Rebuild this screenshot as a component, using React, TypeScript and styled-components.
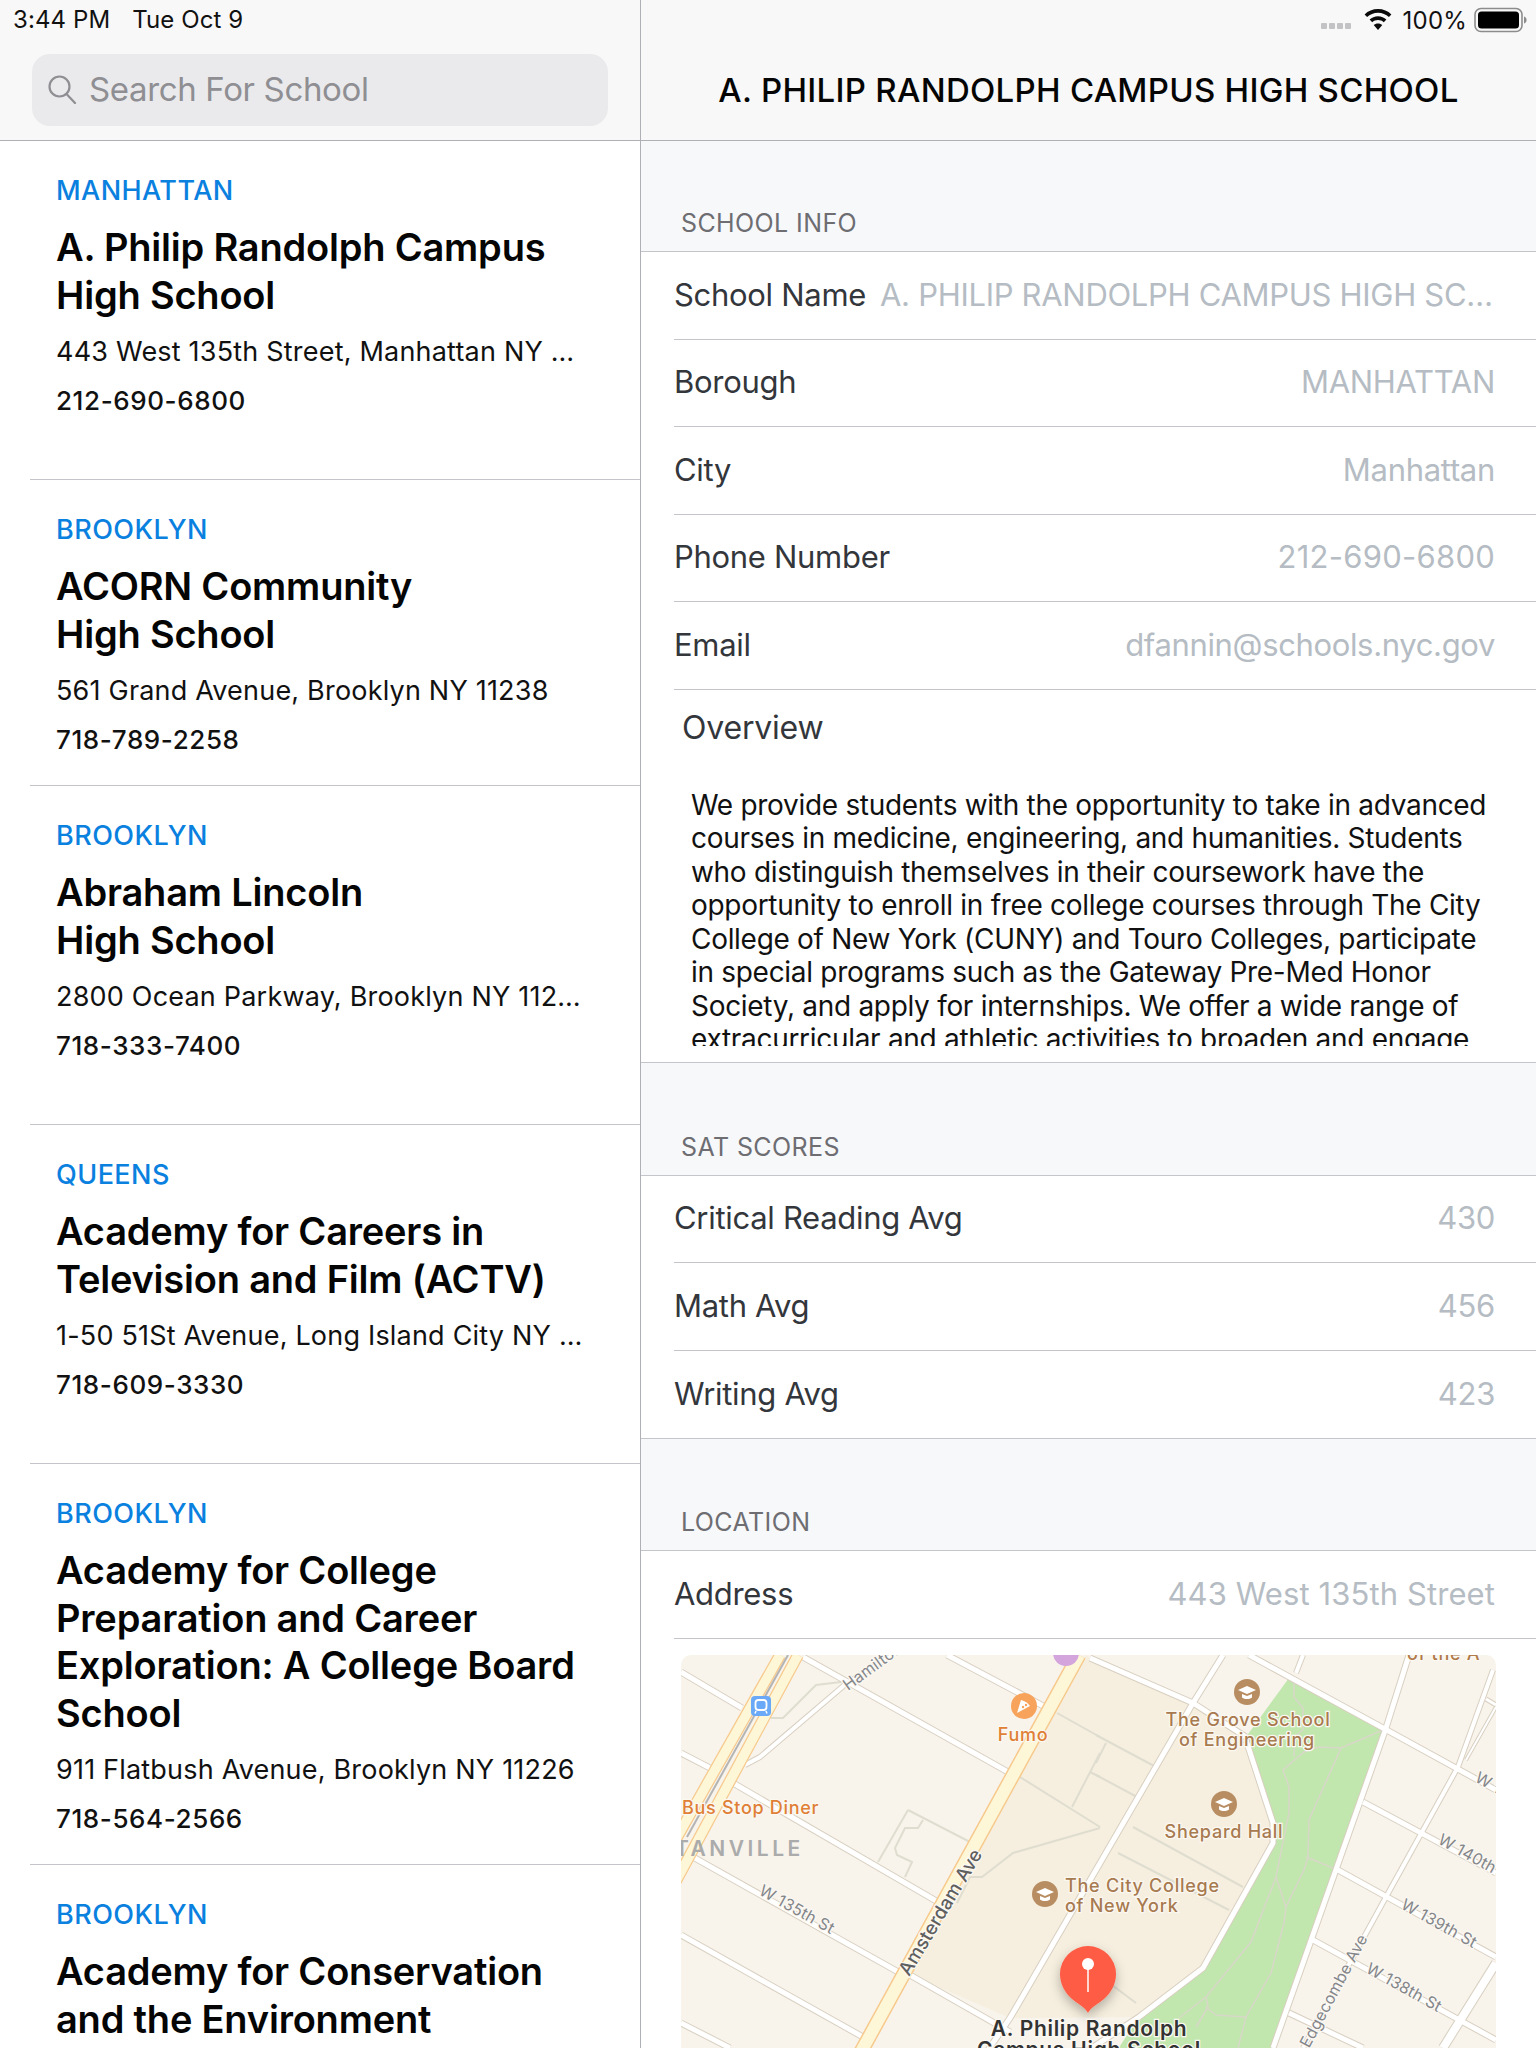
import React from 'react'
import styled, { createGlobalStyle } from 'styled-components'

const GlobalStyle = createGlobalStyle`
  html, body {
    margin: 0;
    padding: 0;
    background: #fff;
    font-family: Inter, "Liberation Sans", sans-serif;
  }
`

const Page = styled.div`
  display: flex;
  width: 1536px;
  height: 2048px;
  overflow: hidden;
`

const Sidebar = styled.div`
  width: 640px;
  flex: none;
  overflow: hidden;
  border-right: 1px solid #aeb0b5;
`

const Detail = styled.div`
  flex: 1;
  min-width: 0;
  overflow: hidden;
  background: #f7f8fa;
`

const Bar = styled.div`
  height: 140px;
  background: #f8f8f8;
  border-bottom: 1px solid #aeb0b5;
`

const StatusLeft = styled.div`
  display: flex;
  gap: 22px;
  height: 38px;
  padding: 1px 0 0 13px;
  box-sizing: border-box;
  font-size: 24px;
  line-height: 38px;
  color: #111;
  letter-spacing: 0.1px;
`

const SearchBox = styled.div`
  display: flex;
  align-items: center;
  gap: 12px;
  height: 72px;
  box-sizing: border-box;
  margin: 16px 32px 0;
  padding: 0 0 2px 15px;
  border-radius: 18px;
  background: #eaeaec;
  font-size: 33px;
  color: #8e8e93;
  letter-spacing: -0.35px;
`

const Row = styled.div`
  position: relative;
  display: block;
  padding: 32px 57px 0 26px;
  margin-left: 30px;
  border-bottom: 1px solid #c4c5ca;
`

const Borough = styled.div`
  font-size: 27px;
  line-height: 36px;
  font-weight: 500;
  color: #0a80df;
  letter-spacing: 0.45px;
`

const SchoolName = styled.div`
  margin: 15px -57px 0 0;
  font-size: 38px;
  line-height: 47.5px;
  font-weight: 600;
  color: #050505;
  letter-spacing: -0.2px;
`

const Address = styled.div`
  margin-top: 16px;
  font-size: 27px;
  line-height: 34px;
  color: #111;
  white-space: nowrap;
  overflow: hidden;
  text-overflow: ellipsis;
  letter-spacing: 0.2px;
`

const Phone = styled.div<{ $tall: boolean }>`
  margin-top: 16px;
  margin-bottom: ${(props) => (props.$tall ? 62 : 29)}px;
  font-size: 26px;
  line-height: 32px;
  font-weight: 500;
  color: #111;
  letter-spacing: 0.6px;
`

const StatusRight = styled.div`
  display: flex;
  justify-content: flex-end;
  align-items: center;
  height: 40px;
  padding-right: 9px;
  font-size: 24px;
  color: #111;
  letter-spacing: 0.2px;
`

const Dots = styled.div`
  display: flex;
  gap: 2px;
  margin: 11px 13px 0 0;
`

const Dot = styled.span`
  width: 6px;
  height: 6px;
  border-radius: 1px;
  background: #c3c3c5;
`

const NavTitle = styled.div`
  margin-top: 28px;
  text-align: center;
  font-size: 33px;
  line-height: 44px;
  font-weight: 500;
  color: #050505;
  letter-spacing: 0.28px;
`

const SectionLabel = styled.div<{ $height: number }>`
  display: flex;
  align-items: flex-end;
  height: ${(props) => props.$height}px;
  padding: 0 0 13px 40px;
  box-sizing: border-box;
  font-size: 25px;
  line-height: 30px;
  color: #6d6d72;
  letter-spacing: 0.4px;
`

const Group = styled.div`
  background: #fff;
  border-top: 1px solid #c4c5ca;
  border-bottom: 1px solid #c4c5ca;
`

const Field = styled.div<{ $last?: boolean }>`
  display: flex;
  align-items: center;
  justify-content: space-between;
  gap: 14px;
  height: 87.5px;
  box-sizing: border-box;
  margin-left: 33px;
  padding: 0 41px 2px 0;
  border-bottom: ${(props) => (props.$last ? 'none' : '1px solid #c4c5ca')};
  font-size: 31px;
  letter-spacing: -0.3px;
`

const FieldLabel = styled.span`
  flex: none;
  color: #33363b;
`

const FieldValue = styled.span<{ $spacing?: number }>`
  min-width: 0;
  color: #b5bcc3;
  white-space: nowrap;
  overflow: hidden;
  text-overflow: ellipsis;
  letter-spacing: ${(props) => props.$spacing ?? -0.3}px;
`

const Overview = styled.div`
  height: 372px;
`

const OverviewLabel = styled.div`
  padding: 16px 0 0 41px;
  font-size: 32px;
  line-height: 44px;
  color: #33363b;
  letter-spacing: -0.2px;
`

const OverviewText = styled.div`
  height: 257px;
  margin: 39px 40px 0 50px;
  overflow: hidden;
  font-size: 28px;
  line-height: 33.5px;
  color: #111;
  letter-spacing: -0.3px;
`

const MapCard = styled.div`
  height: 420px;
  margin: 16px 40px 0;
  border-radius: 10px;
  overflow: hidden;
  background: #f8f4ec;
`

const schools = [
  { borough: 'MANHATTAN', name: ['A. Philip Randolph Campus', 'High School'], address: '443 West 135th Street, Manhattan NY 10031', phone: '212-690-6800', tall: true },
  { borough: 'BROOKLYN', name: ['ACORN Community', 'High School'], address: '561 Grand Avenue, Brooklyn NY 11238', phone: '718-789-2258', tall: false },
  { borough: 'BROOKLYN', name: ['Abraham Lincoln', 'High School'], address: '2800 Ocean Parkway, Brooklyn NY 11235', phone: '718-333-7400', tall: true },
  { borough: 'QUEENS', name: ['Academy for Careers in', 'Television and Film (ACTV)'], address: '1-50 51St Avenue, Long Island City NY 11101', phone: '718-609-3330', tall: true },
  { borough: 'BROOKLYN', name: ['Academy for College', 'Preparation and Career', 'Exploration: A College Board', 'School'], address: '911 Flatbush Avenue, Brooklyn NY 11226', phone: '718-564-2566', tall: false },
  { borough: 'BROOKLYN', name: ['Academy for Conservation', 'and the Environment'], address: '6565 Flatlands Avenue, Brooklyn NY 11236', phone: '718-968-4101', tall: false },
]

const info: { label: string; value: string; spacing?: number }[] = [
  { label: 'School Name', value: 'A. PHILIP RANDOLPH CAMPUS HIGH SCHOOL' },
  { label: 'Borough', value: 'MANHATTAN' },
  { label: 'City', value: 'Manhattan' },
  { label: 'Phone Number', value: '212-690-6800', spacing: 0.25 },
  { label: 'Email', value: 'dfannin@schools.nyc.gov', spacing: -0.35 },
]

const scores = [
  ['Critical Reading Avg', '430'],
  ['Math Avg', '456'],
  ['Writing Avg', '423'],
]

const overview =
  'We provide students with the opportunity to take in advanced courses in medicine, engineering, and humanities. Students who distinguish themselves in their coursework have the opportunity to enroll in free college courses through The City College of New York (CUNY) and Touro Colleges, participate in special programs such as the Gateway Pre-Med Honor Society, and apply for internships. We offer a wide range of extracurricular and athletic activities to broaden and engage students.'

const SearchIcon = () => (
  <svg width="30" height="30" viewBox="0 0 30 30" fill="none" stroke="#8e8e93" strokeWidth="2.2">
    <circle cx="12.5" cy="12.5" r="10" />
    <line x1="19.5" y1="20" x2="28" y2="29" strokeLinecap="round" />
  </svg>
)

const WifiIcon = () => (
  <svg width="28" height="22" viewBox="0 0 28 22" fill="#0a0a0a" style={{ marginRight: 11 }}>
    <path d="M14 0C8.8 0 4 2 .6 5.4l2.5 2.7C6 5.3 9.8 3.700 14 3.700s8 1.600 10.900 4.400l2.500-2.700C24 2 19.200 0 14 0z" />
    <path d="M14 7.200c-3.300 0-6.200 1.300-8.400 3.400l2.600 2.700c1.500-1.400 3.500-2.300 5.800-2.300s4.300.9 5.800 2.300l2.600-2.700C20.200 8.500 17.300 7.200 14 7.200z" />
    <path d="M14 14.400c-1.700 0-3.200.6-4.300 1.700L14 21l4.300-4.900c-1.100-1.100-2.600-1.700-4.300-1.700z" />
  </svg>
)

const BatteryIcon = () => (
  <svg width="53" height="26" viewBox="0 0 53 26" style={{ marginLeft: 7 }}>
    <rect x="1" y="1.5" width="47" height="23" rx="6" fill="none" stroke="#8c8c8c" strokeWidth="1.6" />
    <rect x="4" y="4.5" width="41" height="17" rx="3.5" fill="#000" />
    <path d="M50 9.500c1.600.4 2.600 1.800 2.600 3.500s-1 3.100-2.600 3.500z" fill="#8c8c8c" />
  </svg>
)

const roads: [string, number][] = [
  ['0,17 61,53', 5],
  ['122,2 327,117', 5],
  ['0,98 29,113', 5],
  ['52,128 257,247', 5],
  ['12,202 219,318', 5],
  ['229,320 329,377', 5],
  ['0,280 182,382', 5],
  ['0,368 49,393', 5],
  ['266,0 366,53', 5],
  ['409,3 512,48 565,82', 5],
  ['568,0 702,73 815,135', 5],
  ['64,110 79,102 166,28 212,0', 4],
  ['542,0 512,48 329,363 290,420', 5],
  ['565,85 592,168 592,188 522,313 458,362 400,400', 5],
  ['728,0 705,73 592,393', 5],
  ['682,147 815,218', 5],
  ['657,215 815,302', 5],
  ['632,285 815,385', 5],
  ['608,358 682,393', 5],
  ['812,15 777,112 705,242 622,393', 4],
  ['815,308 762,393', 8],
  ['815,52 785,105', 2],
  ['622,0 615,18', 4],
  ['805,44 815,50', 3],
]

const campusPaths = [
  '227,155 197,207',
  '227,155 289,187',
  '242,165 237,173 224,173 214,193 216,200 231,207 224,222',
  '419,173 332,198 301,222 289,222 276,248',
  '339,122 419,172',
  '419,98 391,152',
  '409,117 419,122',
  '376,58 419,82',
  '415,80 475,112',
  '425,88 415,108',
  '415,120 458,143',
  '452,172 562,232',
  '437,198 548,255',
  '415,318 455,348',
  '90,63 102,63 135,30 160,27',
]

const parkPaths = [
  '613,28 613,42 622,53 622,75 613,82 613,102',
  '702,75 660,93 638,92 623,97 602,115 608,132 608,158 595,222 570,287 525,342 498,363',
  '660,93 628,165 627,202 623,215 605,252 603,268 590,318 565,362 557,393',
  '625,202 652,213',
  '595,222 605,252',
  '525,342 527,352 515,372',
  '525,352 535,360 565,362',
]

const GradIcon = ({ x, y }: { x: number; y: number }) => (
  <g>
    <circle cx={x} cy={y} r="13" fill="#b88d62" />
    <path d={`M${x - 9} ${y - 2}l9-4 9 4-9 4z`} fill="#fff" />
    <path d={`M${x - 5} ${y + 2}v3.500c3 2 7 2 10 0v-3.500l-5 2z`} fill="#fff" />
  </g>
)

const mapLabel = { paintOrder: 'stroke', stroke: '#fbf8f2', strokeWidth: 2.5 } as const

const CampusMap = () => (
  <svg width="816" height="420" viewBox="0 0 816 420" fontFamily="Inter, sans-serif" style={{ display: 'block' }}>
    <defs>
      <filter id="pinShadow" x="-50%" y="-50%" width="200%" height="200%">
        <feDropShadow dx="0" dy="5" stdDeviation="6" floodColor="#000" floodOpacity="0.28" />
      </filter>
    </defs>
    <polygon points="405,0 409,3 512,48 568,82 608,23 592,188 522,313 458,362 329,363 225,318" fill="#f6efdf" />
    <polygon points="608,23 702,75 592,393 592,420 420,420 458,362 522,313 592,188 592,168 572,98 565,82" fill="#c1e6ae" />
    {campusPaths.map((p) => (
      <polyline key={p} points={p} fill="none" stroke="#dfddcf" strokeWidth="2" />
    ))}
    {parkPaths.map((p) => (
      <polyline key={p} points={p} fill="none" stroke="#d8d8c8" strokeWidth="1.5" />
    ))}
    {roads.map(([p, w]) => (
      <polyline key={`c${p}`} points={p} fill="none" stroke="#d8cfc0" strokeWidth={w + 2} />
    ))}
    {roads.map(([p, w]) => (
      <polyline key={p} points={p} fill="none" stroke="#fff" strokeWidth={w} />
    ))}
    <line x1="398" y1="0" x2="170" y2="415" stroke="#f7c98c" strokeWidth="15" />
    <line x1="398" y1="0" x2="170" y2="415" stroke="#fdf7d8" strokeWidth="12" />
    <line x1="99" y1="0" x2="-5" y2="184" stroke="#f7c98c" strokeWidth="12" />
    <line x1="99" y1="0" x2="-5" y2="184" stroke="#fdf7d8" strokeWidth="9.500" />
    <line x1="117" y1="0" x2="-5" y2="226" stroke="#f7c98c" strokeWidth="12" />
    <line x1="117" y1="0" x2="-5" y2="226" stroke="#fdf7d8" strokeWidth="9.500" />
    <line x1="107" y1="0" x2="6" y2="182" stroke="#b4b4b4" strokeWidth="2" />

    <rect x="70" y="41" width="20" height="20" rx="4" fill="#6aa9f7" />
    <rect x="74.500" y="45" width="11" height="10" rx="3" fill="none" stroke="#fff" strokeWidth="1.800" />
    <path d="M75 56l-1 2.500M85 56l1 2.500" stroke="#fff" strokeWidth="1.500" />
    <circle cx="343" cy="51" r="13" fill="#f7a35c" />
    <path d="M336 58l4-13c4 1 7 3 9 6z" fill="#fff" />
    <circle cx="342" cy="52" r="1.200" fill="#f7a35c" />
    <circle cx="345" cy="50" r="1.200" fill="#f7a35c" />
    <circle cx="385" cy="-2" r="13" fill="#d3a5dc" />
    <GradIcon x={566} y={37} />
    <GradIcon x={543} y={149} />
    <GradIcon x={364} y={239} />

    <g fontSize="18" fontWeight="500" letterSpacing="0.7" fill="#e07f36" style={mapLabel}>
      <text x="342" y="86" textAnchor="middle">Fumo</text>
      <text x="1" y="159">Bus Stop Diner</text>
      <text x="726" y="5" fill="#b07a4a">of the A</text>
    </g>
    <g fontSize="18" fontWeight="500" letterSpacing="0.75" fill="#a87a4f" style={mapLabel}>
      <text x="567" y="71" textAnchor="middle">The Grove School</text>
      <text x="566" y="91" textAnchor="middle">of Engineering</text>
      <text x="543" y="183" textAnchor="middle">Shepard Hall</text>
      <text x="384" y="237">The City College</text>
      <text x="384" y="257">of New York</text>
    </g>
    <text x="-6" y="201" fontSize="21" fontWeight="600" letterSpacing="3.500" fill="#ababab">TANVILLE</text>
    <g fontSize="16" letterSpacing="0.2" fill="#84868a" style={mapLabel}>
      <text transform="translate(77,239) rotate(29)">W 135th St</text>
      <text transform="translate(756,188) rotate(29)">W 140th St</text>
      <text transform="translate(719,253) rotate(29)">W 139th St</text>
      <text transform="translate(684,317) rotate(29)">W 138th St</text>
      <text transform="translate(793,126) rotate(29)">W 141st St</text>
      <text transform="translate(167,36) rotate(-36)">Hamilton Pl</text>
      <text transform="translate(687,283) rotate(-62)" textAnchor="end">Edgecombe Ave</text>
    </g>
    <text transform="translate(228,322) rotate(-59)" fontSize="19" fontWeight="500" fill="#5f5f5f" style={mapLabel}>Amsterdam Ave</text>

    <path
      d="M407 358c-3-6-10-9-16-14-7-6-12-15-12-25a28 28 0 0 1 56 0c0 10-5 19-12 25-6 5-13 8-16 14z"
      fill="#ff5b45"
      filter="url(#pinShadow)"
    />
    <line x1="407" y1="312" x2="407" y2="337" stroke="#fff" strokeWidth="1.500" />
    <circle cx="407" cy="309" r="6" fill="#fff" />
    <g fontSize="21" fontWeight="600" letterSpacing="0.7" fill="#333" textAnchor="middle" style={mapLabel}>
      <text x="408" y="381">A. Philip Randolph</text>
      <text x="408" y="402">Campus High School</text>
    </g>
  </svg>
)

const App = () => (
  <Page>
    <GlobalStyle />
    <Sidebar>
      <Bar>
        <StatusLeft>
          <span>3:44 PM</span>
          <span>Tue Oct 9</span>
        </StatusLeft>
        <SearchBox>
          <SearchIcon />
          Search For School
        </SearchBox>
      </Bar>
      {schools.map((school) => (
        <Row key={school.phone}>
          <Borough>{school.borough}</Borough>
          <SchoolName>
            {school.name.map((line) => (
              <div key={line}>{line}</div>
            ))}
          </SchoolName>
          <Address>{school.address}</Address>
          <Phone $tall={school.tall}>{school.phone}</Phone>
        </Row>
      ))}
    </Sidebar>
    <Detail>
      <Bar>
        <StatusRight>
          <Dots>
            <Dot />
            <Dot />
            <Dot />
            <Dot />
          </Dots>
          <WifiIcon />
          100%
          <BatteryIcon />
        </StatusRight>
        <NavTitle>A. PHILIP RANDOLPH CAMPUS HIGH SCHOOL</NavTitle>
      </Bar>
      <SectionLabel $height={110}>SCHOOL INFO</SectionLabel>
      <Group>
        {info.map((row) => (
          <Field key={row.label}>
            <FieldLabel>{row.label}</FieldLabel>
            <FieldValue $spacing={row.spacing}>{row.value}</FieldValue>
          </Field>
        ))}
        <Overview>
          <OverviewLabel>Overview</OverviewLabel>
          <OverviewText>{overview}</OverviewText>
        </Overview>
      </Group>
      <SectionLabel $height={112}>SAT SCORES</SectionLabel>
      <Group>
        {scores.map(([label, value], i) => (
          <Field key={label} $last={i === scores.length - 1}>
            <FieldLabel>{label}</FieldLabel>
            <FieldValue>{value}</FieldValue>
          </Field>
        ))}
      </Group>
      <SectionLabel $height={111}>LOCATION</SectionLabel>
      <Group>
        <Field>
          <FieldLabel>Address</FieldLabel>
          <FieldValue $spacing={0.1}>443 West 135th Street</FieldValue>
        </Field>
        <MapCard>
          <CampusMap />
        </MapCard>
      </Group>
    </Detail>
  </Page>
)

export default App
